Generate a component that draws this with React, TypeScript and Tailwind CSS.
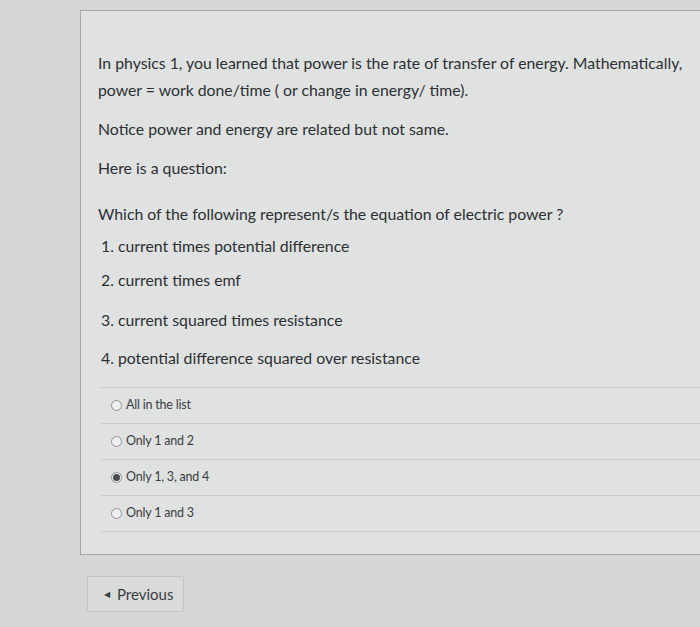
import React from 'react';

const options = [
  { label: 'All in the list', checked: false },
  { label: 'Only 1 and 2', checked: false },
  { label: 'Only 1, 3, and 4', checked: true },
  { label: 'Only 1 and 3', checked: false },
];

function Radio({ checked }: { checked: boolean }) {
  return (
    <span className="flex h-[11px] w-[11px] items-center justify-center rounded-full border border-[#8e9193] bg-[#eef0f0]">
      {checked && <span className="h-[7px] w-[7px] rounded-full bg-[#4a4d50]" />}
    </span>
  );
}

export default function App() {
  return (
    <div
      className="h-[627px] w-[700px] overflow-hidden bg-[#d5d6d6] text-[#2c3033]"
      style={{ fontFamily: 'Lato, "Open Sans", sans-serif' }}
    >
      <div className="pl-[80px] pt-[10px]">
        <div className="h-[545px] border-l border-t border-b border-[#a3a5a6] bg-[#e0e1e1] pl-[17px] pt-[38px] text-[15.8px]">
          <p className="leading-[27px]">
            In physics 1, you learned that power is the rate of transfer of energy. Mathematically,
          </p>
          <p className="leading-[27px]">power = work done/time ( or change in energy/ time).</p>
          <p className="mt-[12px] leading-[27px]">Notice power and energy are related but not same.</p>
          <p className="mt-[12px] leading-[27px]">Here is a question:</p>
          <p className="mt-[19px] leading-[27px]">Which of the following represent/s the equation of electric power ?</p>
          <div className="mt-[5px] space-y-[7px] pl-[3px]">
            <p className="leading-[27px]">1. current times potential difference</p>
            <p className="leading-[27px]">2. current times emf</p>
            <p className="mt-[13px] leading-[27px]">3. current squared times resistance</p>
            <p className="mt-[11px] leading-[27px]">4. potential difference squared over resistance</p>
          </div>
          <div className="mt-[16px] ml-[3px] border-t border-[#c3c5c6] text-[12.5px] tracking-[-0.2px] text-[#3a3e41]">
            {options.map((o) => (
              <div key={o.label} className="flex h-[36px] items-center gap-[4px] border-b border-[#c7c9ca] pl-[10px]">
                <Radio checked={o.checked} />
                <span>{o.label}</span>
              </div>
            ))}
          </div>
        </div>
      </div>
      <div className="pl-[87px] pt-[21px]">
        <button className="flex h-[36px] w-[97px] items-center gap-[7px] rounded-[2px] border border-[#c2c4c5] bg-[#d9dbdb] pl-[16px] text-[15px] text-[#3a3e41]">
          <span className="text-[8px]">◀</span>
          <span>Previous</span>
        </button>
      </div>
    </div>
  );
}
